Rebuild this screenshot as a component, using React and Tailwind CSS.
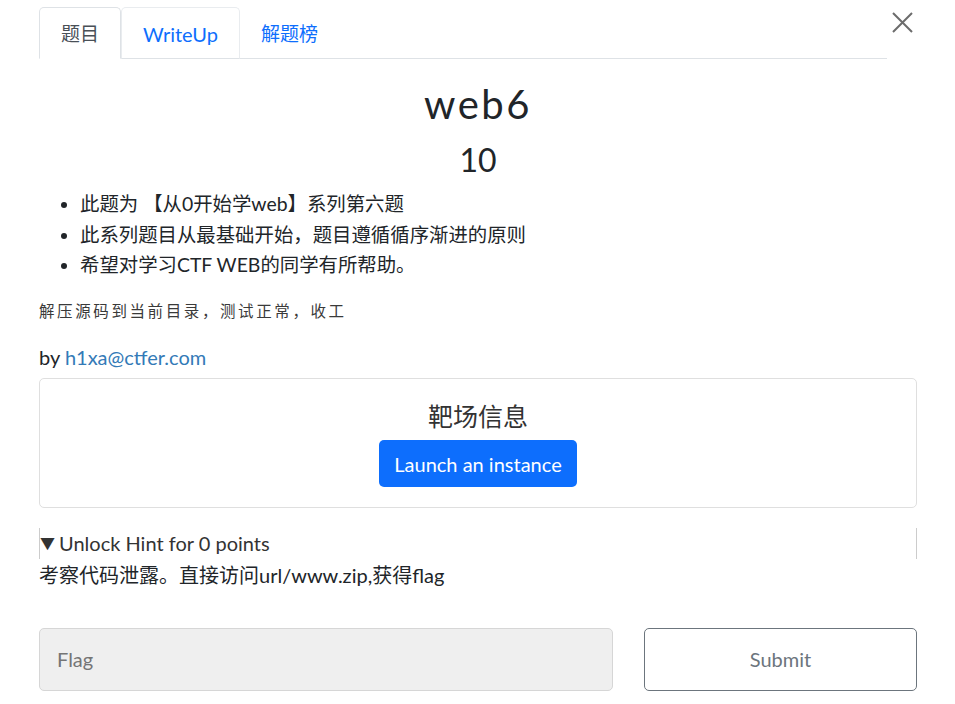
import { useState } from 'react';

const font = { fontFamily: 'Lato, "Noto Sans CJK SC", sans-serif' };

function App() {
  const [tab, setTab] = useState('challenge');
  const [flag, setFlag] = useState('');

  return (
    <div className="min-h-screen bg-white text-[#212529]" style={font}>
      <div className="pl-[39px] pr-[38px]">
        {/* Tabs + close */}
        <div className="flex items-start">
          <nav className="flex flex-1 border-b border-[#dee2e6] pt-[7px]">
            <button
              onClick={() => setTab('challenge')}
              className="-mb-px h-[52px] w-[82px] rounded-t-[5px] border border-[#dee2e6] border-b-white bg-white pt-[2px] text-[19px] text-[#495057]"
            >
              题目
            </button>
            <button
              onClick={() => setTab('writeup')}
              className="-mb-px h-[52px] w-[119px] rounded-t-[5px] border border-[#e9ecef] border-b-[#dee2e6] pt-[2px] text-[20px] text-[#0d6efd]"
            >
              WriteUp
            </button>
            <button
              onClick={() => setTab('solves')}
              className="-mb-px h-[52px] px-[21px] pt-[2px] text-[19px] text-[#0d6efd]"
            >
              解题榜
            </button>
          </nav>
          <button className="mt-[12px] ml-[5px] mr-[4px] flex h-[21px] w-[21px] items-center justify-center">
            <svg width="21" height="21" viewBox="0 0 21 21">
              <path d="M1 1L20 20M20 1L1 20" stroke="#6c6c6c" strokeWidth="2" />
            </svg>
          </button>
        </div>

        {/* Title */}
        <h1 className="mt-[21px] text-center text-[40px] font-normal leading-[48px] tracking-[2.5px]">web6</h1>
        <h2 className="mt-[12px] text-center text-[32px] font-normal leading-[40px]">10</h2>

        {/* Description */}
        <ul className="mt-[9px] list-disc pl-[41px] text-[19.4px] leading-[30.5px]">
          <li>此题为 【从0开始学web】系列第六题</li>
          <li>此系列题目从最基础开始，题目遵循循序渐进的原则</li>
          <li>希望对学习CTF WEB的同学有所帮助。</li>
        </ul>
        <p className="mt-[18px] text-[15.5px] leading-[24px] tracking-[2.6px] text-[#3a3a3a]">解压源码到当前目录，测试正常，收工</p>
        <p className="mt-[22px] text-[20px] leading-[24px]">
          by <a href="#" className="text-[#337ab7]">h1xa@ctfer.com</a>
        </p>

        {/* Instance card */}
        <div className="mt-[9px] flex flex-col items-center rounded-[5px] border border-[#dfdfdf] pt-[22px] pb-[20px]">
          <h3 className="text-[25px] leading-[30px] text-[#333]">靶场信息</h3>
          <button className="mt-[9px] h-[47px] w-[198px] rounded-[5px] bg-[#0d6efd] pt-[1px] text-[20px] text-white">
            Launch an instance
          </button>
        </div>

        {/* Hint */}
        <details open className="mt-[20px] border-x border-[#ccc]">
          <summary className="flex list-none items-center text-[20px] leading-[31px] text-[#333]">
            <span className="mr-[4px] text-[15px]">▼</span>Unlock Hint for 0 points
          </summary>
        </details>
        <p className="mt-[1px] text-[20px] leading-[30px]">考察代码泄露。直接访问url/www.zip,获得flag</p>

        {/* Flag form */}
        <form className="mt-[38px] flex gap-[31px]" onSubmit={(e) => e.preventDefault()}>
          <input
            value={flag}
            onChange={(e) => setFlag(e.target.value)}
            placeholder="Flag"
            className="h-[63px] flex-1 rounded-[5px] border border-[#d6d6d6] bg-[#efefef] px-[17px] text-[20px] placeholder:text-[#757575] outline-none"
          />
          <button type="submit" className="h-[63px] w-[273px] rounded-[5px] border border-[#6c757d] bg-white text-[20px] text-[#6c757d]">
            Submit
          </button>
        </form>
      </div>
    </div>
  );
}

export default App;
